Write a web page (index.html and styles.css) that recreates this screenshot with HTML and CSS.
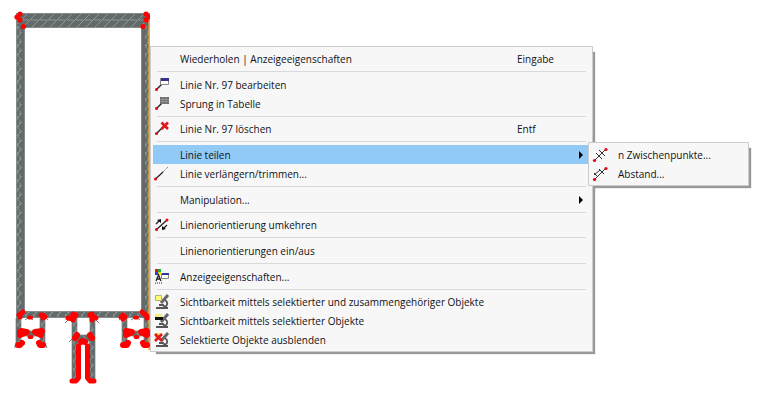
FILE: index.html
```html
<!DOCTYPE html>
<html lang="de">
<head>
<meta charset="utf-8">
<meta name="viewport" content="width=device-width, initial-scale=1">
<title>Linie teilen</title>
<link rel="stylesheet" href="styles.css">
</head>
<body>
<main class="workspace">
<svg class="drawing" viewBox="0 0 150 407" aria-hidden="true">
  <defs>
    <pattern id="hatch-wide" width="9" height="14" patternUnits="userSpaceOnUse" patternTransform="translate(4 13)">
      <rect width="9" height="14" fill="#626a6a"/>
      <path d="M-1 7L5 1M8 7L14 1M1 14L9 6M-8 14L0 6M0 7H7" stroke="#98a09f" stroke-width=".8"/>
    </pattern>
    <pattern id="hatch" width="8" height="9" patternUnits="userSpaceOnUse" patternTransform="translate(16 3)">
      <rect width="8" height="9" fill="#626a6a"/>
      <path d="M1 7L6 2M4 0V4M2 5V9" stroke="#98a09f" stroke-width=".8"/>
    </pattern>
  </defs>
  <!-- profile body -->
  <path fill="url(#hatch-wide)" d="M16 13H150V28H16z"/>
  <path fill="url(#hatch)" d="M16 26H24V318H16zM142 26H150V318H142zM24 311H142V318H24z"/>
  <path fill="none" stroke="#858b8b" d="M16.500 345V13.500H149.500V345M24.500 28V311.500H141.500V27.500H24.500M24 317.500H142"/>
  <!-- feet -->
  <path fill="url(#hatch)" stroke="#7d8383" stroke-width=".7" d="M16 318H21V331H40V318H45V343H40V336H21V345H16zM122 318H127V331H144V318H149V345H144V336H127V343H122z"/>
  <path fill="url(#hatch)" stroke="#7d8383" stroke-width=".7" d="M72 318H77V335H90V318H95V380H89V341H78V380H72z"/>
  <path fill="none" stroke="#555b5b" stroke-width=".8" d="M65 323L72 316M70 317L66 313M99 323L92 316M93 318L98 313M45 317L48 320M25 320L29 317L33 320M131 320L136 317L140 320M119 320L123 317M69 342L73 338M95 342L91 338M15 345V348M45 343L47 348"/>
  <!-- edge of the selected line -->
  <path d="M149.200 18V350" stroke="#f3a72e" stroke-width="1.600"/>
  <!-- nodes -->
  <g fill="#f00">
    <circle cx="20" cy="14" r="2.600"/><circle cx="17" cy="17" r="2.600"/><circle cx="20" cy="20" r="2.600"/><circle cx="23.500" cy="26.500" r="2.600"/>
    <circle cx="146" cy="14" r="2.600"/><circle cx="149" cy="17" r="2.600"/><circle cx="146" cy="20" r="2.600"/><circle cx="143" cy="26.500" r="2.600"/>
    <ellipse cx="30" cy="317.500" rx="3" ry="2"/><ellipse cx="136" cy="317.500" rx="3" ry="2"/>
    <ellipse cx="30.500" cy="337" rx="3" ry="2"/><ellipse cx="136.500" cy="337" rx="3" ry="2"/>
  </g>
  <g fill="none" stroke="#f00" stroke-linecap="round" stroke-linejoin="round">
    <path stroke-width="5" d="M19 315L23 312M20 317V315M41 315L45 317M43 318V315M68 318L73 319L76 315M73 314V320M90 315L96 318M92 314V320M121 317H125M123 315V319M142 312L147 316V318"/>
    <path stroke-width="6" d="M21 331L27 332L20 335V332M42 331L35 332L41 335V332M126 331L132 332L126 335V332M147 331L141 332L147 335V332"/>
    <path stroke-width="6" d="M18 345L20 345L22 343M43 345L40 345L39 343M123 345L127 345L128 343M147 345L144 345L143 343"/>
    <path stroke-width="6" d="M75 338L77 335M92 338L90 335M81 342L83 341L85 342"/>
    <path stroke-width="5" d="M78.500 346V378L76 381H72M87.500 346V378L90 381H94"/>
  </g>
</svg>

<div class="menu" role="menu" aria-label="Linie Nr. 97">
  <button class="item" role="menuitem"><span class="icon"></span><span class="label">Wiederholen | Anzeigeeigenschaften</span><span class="key">Eingabe</span></button>
  <hr>
  <button class="item" role="menuitem">
    <svg class="icon" viewBox="0 0 16 16"><path d="M2 13L8 7" stroke="#222" stroke-width="1.400"/><circle cx="2.500" cy="12.500" r="1.500" fill="#e30613"/><path d="M6.500 1.500H14.500V7.500H6.500z" fill="#fff" stroke="#888"/><path d="M7 1H15V4H7z" fill="#34348a"/></svg>
    <span class="label">Linie Nr. 97 bearbeiten</span></button>
  <button class="item" role="menuitem">
    <svg class="icon" viewBox="0 0 16 16"><path d="M2 13L8 7" stroke="#222" stroke-width="1.400"/><circle cx="2.500" cy="12.500" r="1.500" fill="#e30613"/><path d="M6 1H15V8H6z" fill="#6c6c6c"/><path d="M6 3.500H15M6 5.500H15M9 1V8M12 1V8" stroke="#aaa" stroke-width=".6"/></svg>
    <span class="label">Sprung in Tabelle</span></button>
  <hr>
  <button class="item" role="menuitem">
    <svg class="icon" viewBox="0 0 16 16"><path d="M2 13L8 7" stroke="#222" stroke-width="1.400"/><circle cx="2.500" cy="12.500" r="1.500" fill="#e30613"/><path d="M7.500 1.500L14 8M14 1.500L7.500 8" stroke="#e3171b" stroke-width="2.600"/></svg>
    <span class="label">Linie Nr. 97 löschen</span><span class="key">Entf</span></button>
  <hr>
  <div class="branch">
    <button class="item item-open" role="menuitem" aria-haspopup="true" aria-expanded="true"><span class="icon"></span><span class="label">Linie teilen</span><svg class="arrow" viewBox="0 0 4 8"><path d="M0 0L4 4L0 8z"/></svg></button>
    <div class="menu submenu" role="menu" aria-label="Linie teilen">
      <button class="item" role="menuitem">
        <svg class="icon" viewBox="0 0 16 16"><path d="M2 14L14 2M4 6L10 12M7 3L13 9" fill="none" stroke="#333"/><circle cx="2.500" cy="13.500" r="1.600" fill="#e30613"/><circle cx="14" cy="2.500" r="1.600" fill="#e30613"/></svg>
        <span class="label">n Zwischenpunkte...</span></button>
      <button class="item" role="menuitem">
        <svg class="icon" viewBox="0 0 16 16"><path d="M2 14L14 2M2 9L8 4M2 7L6 11M7 3L12 8" fill="none" stroke="#333"/><circle cx="2.500" cy="13.500" r="1.600" fill="#e30613"/><circle cx="14" cy="2.500" r="1.600" fill="#e30613"/></svg>
        <span class="label">Abstand...</span></button>
    </div>
  </div>
  <button class="item" role="menuitem">
    <svg class="icon" viewBox="0 0 16 16"><path d="M1.500 13L9 6" stroke="#222" stroke-width="1.200"/><path d="M9 6L14 1" stroke="#555" stroke-dasharray="1 1"/><circle cx="1.500" cy="13" r="1.500" fill="#e30613"/></svg>
    <span class="label">Linie verlängern/trimmen...</span></button>
  <hr>
  <button class="item" role="menuitem" aria-haspopup="true"><span class="icon"></span><span class="label">Manipulation...</span><svg class="arrow" viewBox="0 0 4 8"><path d="M0 0L4 4L0 8z"/></svg></button>
  <hr>
  <button class="item" role="menuitem">
    <svg class="icon" viewBox="0 0 16 16"><path d="M2 7L5 4M2 13L13 3M9 12L13 8" stroke="#222" stroke-width="1.300"/><path d="M7 2V6L3 3zM8 9L12 12L8 13z" fill="#111"/><circle cx="2.500" cy="12.500" r="1.500" fill="#e30613"/><circle cx="13" cy="3" r="1.500" fill="#e30613"/></svg>
    <span class="label">Linienorientierung umkehren</span></button>
  <hr>
  <button class="item" role="menuitem"><span class="icon"></span><span class="label">Linienorientierungen ein/aus</span></button>
  <hr>
  <button class="item" role="menuitem">
    <svg class="icon" viewBox="0 0 16 16"><path d="M1 0H4V3H1z" fill="#e11"/><path d="M4 0H7V3H4z" fill="#1b3"/><path d="M1 3H4V6H1z" fill="#24d"/><path d="M4 3H7V6H4z" fill="#ed2"/><path d="M2 12L4.500 6L7 12M3 10H6" fill="none" stroke="#222" stroke-width="1.300"/><path d="M1 14H8" stroke="#222" stroke-dasharray="1 1"/><path d="M7.500 4.500H14.500V9.500H7.500z" fill="#fff" stroke="#888"/><path d="M8 4H15V6H8z" fill="#2b3a96"/></svg>
    <span class="label">Anzeigeeigenschaften...</span></button>
  <hr>
  <button class="item" role="menuitem">
    <svg class="icon" viewBox="0 0 16 16"><path d="M2 14H14M5 11H9L11 13C14 11 14 8 11 6" fill="none" stroke="#555" stroke-width="1.800"/><path d="M7 9L14 1" stroke="#666" stroke-width="3"/><path d="M1.500 1.500H7.500V6.500H1.500z" fill="#ffff70" stroke="#b3b36b"/></svg>
    <span class="label">Sichtbarkeit mittels selektierter und zusammengehöriger Objekte</span></button>
  <button class="item" role="menuitem">
    <svg class="icon" viewBox="0 0 16 16"><path d="M2 14H14M5 11H9L11 13C14 11 14 8 11 6" fill="none" stroke="#555" stroke-width="1.800"/><path d="M7 9L14 1" stroke="#666" stroke-width="3"/><path d="M1 1H8V4H1z" fill="#f2ec78"/><path d="M1 4H9V7H1z" fill="#111"/></svg>
    <span class="label">Sichtbarkeit mittels selektierter Objekte</span></button>
  <button class="item" role="menuitem">
    <svg class="icon" viewBox="0 0 16 16"><path d="M2 14H14M5 11H9L11 13C14 11 14 8 11 6" fill="none" stroke="#555" stroke-width="1.800"/><path d="M7 9L14 1" stroke="#666" stroke-width="3"/><path d="M1 1H7V6H1z" fill="#f2dc50"/><path d="M1 2L8 9M8 2L1 9" stroke="#e3171b" stroke-width="2.600"/></svg>
    <span class="label">Selektierte Objekte ausblenden</span></button>
</div>
</main>
</body>
</html>
```
FILE: styles.css
```css
* {
  box-sizing: border-box;
}

body {
  margin: 0;
  background: #fff;
  color: #111118;
  font: 500 10px/18px "Open Sans", "Noto Sans", sans-serif;
}

.workspace {
  display: flex;
  align-items: flex-start;
}

.drawing {
  flex: none;
  width: 150px;
}

.menu {
  flex: 0 1 443px;
  margin-top: 46px;
  padding: 2px;
  background: #f7f7f7;
  border: 1px solid #ccc;
  box-shadow: 4px 4px 1px -2px #999;
}

.menu hr {
  height: 7px;
  margin: 0 4px;
  border: solid transparent;
  border-width: 3px 0;
  background: #d9d9d9 content-box;
}

.menu hr:nth-of-type(3n+2) {
  height: 6px;
  border-bottom-width: 2px;
}

.item {
  display: flex;
  align-items: center;
  width: 100%;
  height: 19px;
  padding: 1px 7px 0 1px;
  border: 0;
  background: none;
  color: inherit;
  font: inherit;
  text-align: left;
  white-space: nowrap;
}

.item-open {
  background: #91c9f7;
}

.icon {
  flex: none;
  width: 16px;
  height: 16px;
  margin-right: 10px;
}

.label {
  flex: 1;
}

.key {
  width: 66px;
}

.arrow {
  width: 4px;
  height: 8px;
}

.branch {
  position: relative;
}

.submenu {
  position: absolute;
  top: -3px;
  left: calc(100% - 2px);
  z-index: 1;
  width: 161px;
  margin: 0;
}
```
